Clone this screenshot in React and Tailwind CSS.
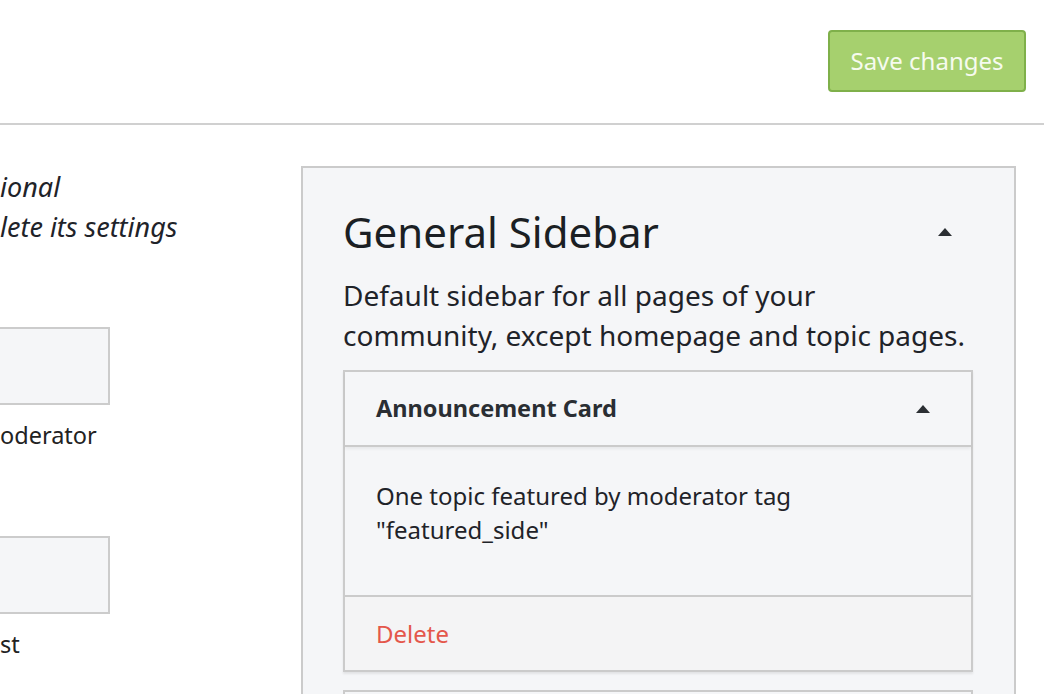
import React from "react";

const Caret = () => (
    <svg width="16" height="10" viewBox="0 0 16 10" className="block">
        <path d="M1 9 L8 1 L15 9 Z" fill="#2b2f33" />
    </svg>
);

const FieldBox = ({ label }) => (
    <div className="flex flex-col">
        <div className="-ml-1 h-[78px] w-[114px] border-2 border-[#cccccc] bg-[#f5f6f8]"></div>
        <div className="mt-[14px] text-[23.5px] leading-[32px] text-[#222222]">{label}</div>
    </div>
);

const App = () => {
    return (
        <div className="min-h-[694px] bg-white overflow-hidden" style={{ fontFamily: '"Noto Sans", "Open Sans", sans-serif' }}>
            <div className="flex justify-end border-b-2 border-[#d0d0d0] pt-[30px] pb-[31px] pr-[18px]">
                <button className="h-[62px] w-[198px] rounded-[4px] border-2 border-[#7fb04a] bg-[#a6d06e] text-[24px] text-[#f6fbef]">
                    Save changes
                </button>
            </div>
            <div className="flex pt-[41px]">
                <div className="w-[301px] shrink-0 overflow-hidden">
                    <div className="pt-[1px] text-[27px] italic leading-[40px] text-[#1f2329]">
                        <div>ional</div>
                        <div>lete its settings</div>
                    </div>
                    <div className="mt-[80px] flex flex-col gap-[85px]">
                        <FieldBox label="oderator" />
                        <FieldBox label="st" />
                    </div>
                </div>
                <div className="w-[715px] shrink-0 border-2 border-b-0 border-[#cbcbcb] bg-[#f5f6f8] pl-[40px] pr-[41px] pt-[38px]">
                    <div className="flex items-center justify-between pr-[20px]">
                        <h1 className="text-[42px] leading-[52px] text-[#1b1f24]">General Sidebar</h1>
                        <Caret />
                    </div>
                    <p className="mt-[17px] text-[28px] leading-[40px] text-[#1f2329]">
                        Default sidebar for all pages of your community, except homepage and topic pages.
                    </p>
                    <div className="mt-[15px] border-2 border-[#cbcbcb] shadow-[0_2px_2px_rgba(0,0,0,0.08)]">
                        <div className="flex h-[75px] items-center justify-between border-b-2 border-[#cbcbcb] pl-[31px] pr-[40px] shadow-[0_2px_3px_rgba(0,0,0,0.06)]">
                            <span className="text-[23.5px] font-bold text-[#2a2e33]">Announcement Card</span>
                            <Caret />
                        </div>
                        <div className="h-[148px] pl-[31px] pt-[32px] text-[24px] leading-[34px] text-[#1f2329]">
                            <div>One topic featured by moderator tag</div>
                            <div>"featured_side"</div>
                        </div>
                        <div className="flex h-[75px] items-center border-t-2 border-[#cbcbcb] bg-[#f4f4f5] pl-[31px]">
                            <span className="text-[24px] text-[#e4574b]">Delete</span>
                        </div>
                    </div>
                    <div className="mt-[18px] h-[40px] border-2 border-b-0 border-[#cbcbcb]"></div>
                </div>
            </div>
        </div>
    );
};

export default App;
